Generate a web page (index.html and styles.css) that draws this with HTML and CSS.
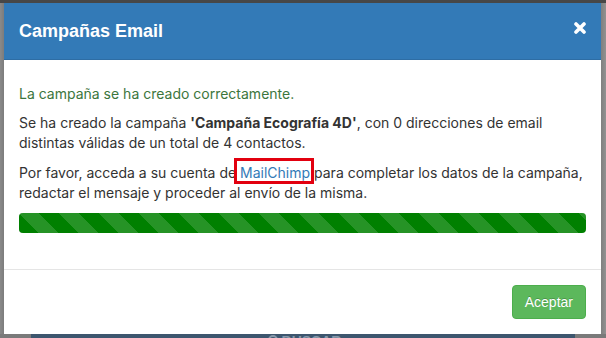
FILE: index.html
```html
<!DOCTYPE html>
<html lang="es">
<head>
<meta charset="utf-8">
<title>Campañas Email</title>
<link rel="stylesheet" href="styles.css">
</head>
<body>
<div class="stage">
  <div class="top-strip"></div>
  <div class="mid">
    <div class="side side-left"></div>
    <div class="modal">
      <div class="modal-header">
        <h4 class="modal-title">Campañas Email</h4>
        <button class="close" type="button" aria-label="Cerrar">
          <svg width="12" height="12" viewBox="0 0 12 12"><path d="M2 2 L10 10 M10 2 L2 10" stroke="#fff" stroke-width="3.6" stroke-linecap="round"/></svg>
        </button>
      </div>
      <div class="modal-body">
        <p class="success">La campaña se ha creado correctamente.</p>
        <p class="msg">Se ha creado la campaña <b>'Campaña Ecografía 4D'</b>, con 0 direcciones de email distintas válidas de un total de 4 contactos.</p>
        <p class="msg">Por favor, acceda a su cuenta de <a class="mc" href="#">MailChimp</a> para completar los datos de la campaña, redactar el mensaje y proceder al envío de la misma.</p>
        <div class="progress"><div class="progress-bar"></div></div>
      </div>
      <div class="modal-footer">
        <button class="btn-success" type="button">Aceptar</button>
      </div>
    </div>
    <div class="side side-right"></div>
  </div>
  <div class="bottom-strip">
    <div class="page-bar">
      <span class="search">
        <svg width="14" height="14" viewBox="0 0 14 14"><circle cx="8" cy="6" r="4" fill="none" stroke="#8899ab" stroke-width="2"/><path d="M5 9 L1 13" stroke="#8899ab" stroke-width="2.4"/></svg>
        BUSCAR
      </span>
    </div>
  </div>
</div>
</body>
</html>
```
FILE: styles.css
```css
html, body {
  margin: 0;
  padding: 0;
}
body {
  width: 606px;
  height: 338px;
  overflow: hidden;
  background: #4a4a4a;
  font-family: Inter, "Liberation Sans", Arial, sans-serif;
}
.stage {
  display: flex;
  flex-direction: column;
  height: 338px;
}
.top-strip {
  height: 3px;
  background: #474747;
}
.mid {
  display: flex;
  height: 331px;
}
.side-left {
  width: 4px;
  background: linear-gradient(to right, #8a8a8a, #7c7c7c);
}
.side-right {
  flex: 1;
  background: linear-gradient(to right, #7f7f7f, #929292);
}
.modal {
  width: 597px;
  background: #fff;
  display: flex;
  flex-direction: column;
}
.modal-header {
  background: #337ab7;
  padding: 15px;
  border-bottom: 1px solid #2e6da4;
  display: flex;
  justify-content: space-between;
  align-items: center;
}
.modal-title {
  margin: 0;
  font-family: "Liberation Sans", Arial, sans-serif;
  font-size: 18px;
  font-weight: bold;
  line-height: 26px;
  color: #fff;
}
.close {
  background: none;
  border: 0;
  padding: 0;
  width: 12px;
  height: 12px;
  margin-bottom: 6px;
  display: flex;
  cursor: pointer;
}
.modal-body {
  padding: 15px;
  font-size: 14px;
  line-height: 20px;
  color: #333;
}
.success {
  color: #3c763d;
  margin: 9px 0 9px;
}
.msg {
  margin: 0 0 10px;
}
.msg b {
  font-weight: 700;
}
.mc {
  color: #337ab7;
  text-decoration: none;
  position: relative;
}
.mc::after {
  content: "";
  position: absolute;
  left: -6px;
  right: -4px;
  top: -6px;
  bottom: -3px;
  border: 3px solid #e2000f;
  pointer-events: none;
}
.progress {
  height: 20px;
  margin: 0 0 21px;
  border-radius: 4px;
  overflow: hidden;
  background: #f5f5f5;
  box-shadow: inset 1px 0 0 rgba(0,0,0,.25);
}
.progress-bar {
  height: 100%;
  width: 100%;
  background-color: #008000;
  background-image: linear-gradient(45deg, rgba(255,255,255,.15) 25%, transparent 25%, transparent 50%, rgba(255,255,255,.15) 50%, rgba(255,255,255,.15) 75%, transparent 75%, transparent);
  background-size: 40px 40px;
}
.modal-footer {
  border-top: 1px solid #e5e5e5;
  padding: 15px;
  display: flex;
  justify-content: flex-end;
}
.btn-success {
  font-family: "Liberation Sans", Arial, sans-serif;
  font-size: 14px;
  line-height: 20px;
  padding: 6px 12px;
  color: #fff;
  background: #5cb85c;
  border: 1px solid #4cae4c;
  border-radius: 4px;
  text-shadow: 0 -1px 0 rgba(0,0,0,.2);
  cursor: pointer;
}
.bottom-strip {
  height: 4px;
  background: #7a7a7a;
  padding-left: 31px;
  display: flex;
}
.page-bar {
  width: 544px;
  background: #3d566e;
  overflow: hidden;
  display: flex;
  justify-content: center;
}
.search {
  display: flex;
  gap: 3px;
  align-items: flex-start;
  font-family: "Liberation Sans", Arial, sans-serif;
  font-weight: bold;
  font-size: 14px;
  line-height: 14px;
  color: #8899ab;
}
```
